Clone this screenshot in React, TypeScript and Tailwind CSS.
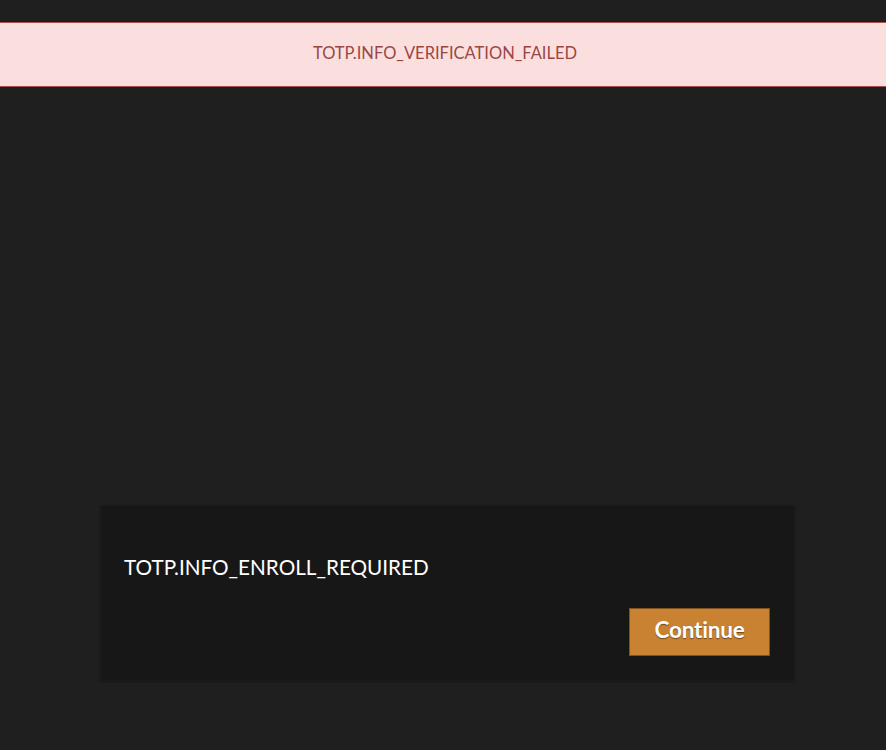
export default function App() {
  return (
    <div
      className="min-h-[750px] w-full bg-[#1f1f1f] pt-[22px] overflow-hidden"
      style={{ fontFamily: 'Lato, "Open Sans", sans-serif' }}
    >
      {/* Error banner */}
      <div className="h-[65px] flex items-center justify-center pb-[3px] pl-[4px] bg-[#fbdfdf] border-y border-[#a8514c]">
        <p className="text-[16.5px] text-[#9a4744]">TOTP.INFO_VERIFICATION_FAILED</p>
      </div>

      {/* Enrollment prompt */}
      <div className="mt-[418px] ml-[100px] w-[695px] bg-[#171717] border border-[#1b1b1b] pl-[23px] pr-6 pt-[47px] pb-[24px] shadow-[0_1px_2px_rgba(0,0,0,0.3)]">
        <p className="text-[20.7px] leading-7 text-white">TOTP.INFO_ENROLL_REQUIRED</p>
        <div className="flex justify-end mt-[27px]">
          <button className="w-[141px] h-[48px] pb-1 bg-[#c88232] border border-[#7f5220] text-white text-[22.5px] font-bold tracking-[-0.2px] [text-shadow:0_1px_1px_rgba(0,0,0,0.45)]">
            Continue
          </button>
        </div>
      </div>
    </div>
  );
}
